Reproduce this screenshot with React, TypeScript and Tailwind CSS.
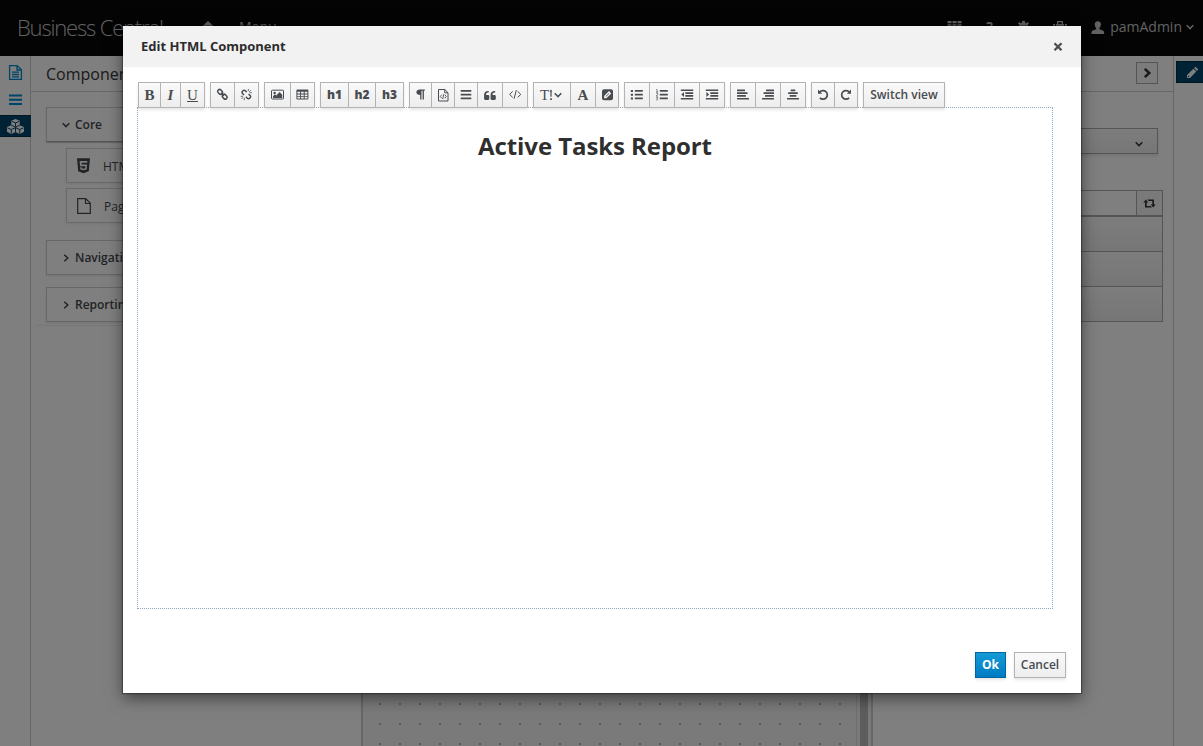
import type { ReactNode } from 'react';

type IconProps = { children: ReactNode; w?: number; h?: number; dx?: number; dy?: number };

function Icon({ children, w = 14, h = 14, dx = 0, dy = 0 }: IconProps) {
  return (
    <svg width={w} height={h} viewBox={`${-dx} ${-dy} ${w} ${h}`} fill="currentColor" className="block shrink-0 overflow-visible">
      {children}
    </svg>
  );
}

function Bars({ rows, pitch = 2.8, top = 0.5 }: { rows: [number, number][]; pitch?: number; top?: number }) {
  return (
    <Icon w={12} h={12}>
      {rows.map(([x, w], i) => (
        <rect key={i} x={x} y={top + i * pitch} width={w} height={1.7} rx={0.3} />
      ))}
    </Icon>
  );
}

function Chevron({ dir, size = 8, stroke = 1.5 }: { dir: 'down' | 'right'; size?: number; stroke?: number }) {
  return (
    <svg width={size} height={size} viewBox="0 0 8 8" fill="none" stroke="currentColor" strokeWidth={stroke} className="block shrink-0">
      <path d={dir === 'down' ? 'M.7 2.2 4 5.6 7.3 2.2' : 'M2.2.7 5.8 4 2.2 7.3'} />
    </svg>
  );
}

function Glyph({ children, className = '' }: { children: ReactNode; className?: string }) {
  return <span className={`font-['Liberation_Serif',serif] text-[15px] leading-none font-bold ${className}`}>{children}</span>;
}

const LinkIcon = (
  <Icon w={12} h={12} dx={-0.7} dy={-0.7}>
    <g fill="none" stroke="currentColor" strokeWidth="1.5">
      <rect x="1.2" y="1.7" width="5.2" height="3.800" rx="1.8" transform="rotate(45 3.8 3.6)" />
      <rect x="5.8" y="6.500" width="5.2" height="3.800" rx="1.8" transform="rotate(45 8.4 8.4)" />
      <path d="m4.600 4.600 3 3" />
    </g>
  </Icon>
);

const UnlinkIcon = (
  <Icon w={12} h={12} dx={-0.7} dy={-0.5}>
    <g fill="none" stroke="currentColor" strokeWidth="1.5">
      <path d="M6.4 3.6 5 2.2a1.6 1.6 0 0 0-2.3 0l-.5.5a1.6 1.6 0 0 0 0 2.3l1.5 1.4" />
      <path d="M5.6 8.4 7 9.8a1.6 1.6 0 0 0 2.3 0l.5-.5a1.6 1.6 0 0 0 0-2.3L8.3 5.6" />
      <path strokeWidth=".8" d="M8 .4v2.3M9 3.3 10.8 1.5M9.2 4.2h2.4M4 9.4v2.3M3 8.7 1.2 10.5M.4 7.8h2.4" />
    </g>
  </Icon>
);

const PictureIcon = (
  <Icon w={13} h={12} dy={-0.6}>
    <rect x=".5" y="1.8" width="12" height="8.800" rx=".8" fill="none" stroke="currentColor" />
    <circle cx="3.6" cy="4.600" r="1.2" />
    <path d="M2 9.5V7.8l2-2 1.2 1.2 3.4-3.3L11.2 6.300v3.2z" />
  </Icon>
);

const TableIcon = (
  <Icon w={12} h={12} dx={-0.6} dy={-0.5}>
    <path d="M1 1h10a1 1 0 0 1 1 1v8a1 1 0 0 1-1 1H1a1 1 0 0 1-1-1V2a1 1 0 0 1 1-1m0 2.300v1.700h2.700V3.300zm3.700 0v1.700h2.600V3.300zm3.600 0v1.700H11V3.300zM1 5.900v1.500h2.700V5.900zm3.700 0v1.500h2.600V5.900zm3.600 0v1.500H11V5.900zM1 8.300v1.700h2.700V8.300zm3.700 0v1.700h2.600V8.300zm3.600 0v1.700H11V8.300z" fillRule="evenodd" />
  </Icon>
);

const ParagraphIcon = (
  <Icon w={9} h={12} dy={-0.5}>
    <path d="M3.800 1H8.800v1.200H7.900V11H6.600V2.200H5.500V11H4.200V6.500C2 6.500.4 5.500.4 3.700.4 2 1.900 1 3.800 1" />
  </Icon>
);

const FileCodeIcon = (
  <Icon w={11} h={13}>
    <g fill="none" stroke="currentColor">
      <path d="M.5.500h6.300l3.200 3.200v8.300H.5zM6.700.500V3.800H10" />
      <path strokeWidth=".9" d="M3.800 5.700 2.300 7.500l1.500 1.800M6.800 5.700l1.500 1.800-1.500 1.800M5.800 5.200 4.700 10" />
    </g>
  </Icon>
);

const QuoteIcon = (
  <Icon w={12} h={11}>
    <path d="M5.300 6.200v2.600c0 .7-.5 1.200-1.200 1.200H1.300C.6 10 .1 9.500.1 8.800V4.600C.1 2.500 1.800.900 3.900.900h.8v1.500h-.8c-1 0-1.800.8-1.800 1.800v.7h2c.7 0 1.200.6 1.200 1.300M11.800 6.200v2.600c0 .7-.5 1.200-1.200 1.200H7.800c-.7 0-1.200-.5-1.200-1.200V4.600c0-2.100 1.700-3.700 3.800-3.700h.8v1.500h-.8c-1 0-1.800.8-1.800 1.800v.7h2c.7 0 1.200.6 1.200 1.300" />
  </Icon>
);

const CodeIcon = (
  <Icon w={13} h={12} dx={-0.3} dy={-0.6}>
    <path fill="none" stroke="currentColor" strokeWidth="1" d="M4 3 .9 6 4 9M9 3l3.100 3L9 9M7.600 1.700 5.400 10.300" />
  </Icon>
);

const PenSquareIcon = (
  <Icon w={11} h={12} dy={-0.3}>
    <path fillRule="evenodd" d="M2 .500h7A2 2 0 0 1 11 2.500v7A2 2 0 0 1 9 11.500H2a2 2 0 0 1-2-2v-7A2 2 0 0 1 2 .500m5 1.800L2.100 7.200v2.400h2.300l4.900-4.900z" />
    <path d="m3.700 7.600 3.300-3.300.4.400-3.300 3.300z" />
  </Icon>
);

function ListIcon({ numbered }: { numbered?: boolean }) {
  return (
    <Icon w={12} h={12} dx={-0.2}>
      <path d="M4 1.100h8v1.700H4zM4 4.800h8v1.700H4zM4 8.500h8v1.700H4z" />
      {numbered ? (
        <path fill="none" stroke="currentColor" strokeWidth=".7" d="M.5.500h.8v2.600M.3 3.100h2M.4 4.300h1.500v1.200L.4 7.100h1.700M.4 8.400h1.500l-.8 1.100c1.400.1 1 1.900-.8 1.500" />
      ) : (
        <path d="M0 1h2.200v2H0zM0 4.700h2.200v2H0zM0 8.400h2.200v2H0z" />
      )}
    </Icon>
  );
}

function IndentIcon({ out }: { out?: boolean }) {
  return (
    <Icon w={13} h={12} dx={-0.5} dy={-0.4}>
      <path d="M.3.900h12.400v1.600H.3zM4.800 3.700h7.900v1.600H4.800zM4.800 6.500h7.900v1.600H4.800zM.3 9.300h12.400v1.600H.3z" />
      <path d={out ? 'M3.500 3.500v4.800L.8 5.900z' : 'M.9 3.500v4.800L3.600 5.900z'} />
    </Icon>
  );
}

function RotateIcon({ flip }: { flip?: boolean }) {
  return (
    <Icon w={12} h={12} dy={-0.3}>
      <g transform={flip ? 'translate(12 0) scale(-1 1)' : undefined}>
        <path fill="none" stroke="currentColor" strokeWidth="1.700" d="M2.700 3.400A4.300 4.300 0 1 1 2.900 9.100" />
        <path d="M1 .900v4.200h4.200z" />
      </g>
    </Icon>
  );
}

const TextHeightIcon = (
  <span className="mr-[2px] flex items-center">
    <Glyph className="font-normal">T</Glyph>
    <Icon w={4} h={12}>
      <path d="M2 .500 3.400 2.400H2.600v5.300H1.400V2.400H.6zM1.200 9.300h1.700v1.700H1.200z" />
    </Icon>
    <span className="w-px" />
    <Chevron dir="down" />
  </span>
);

const groups: { w: string; node: ReactNode }[][] = [
  [
    { w: 'w-[23px]', node: <Glyph>B</Glyph> },
    { w: 'w-[21px]', node: <Glyph className="italic">I</Glyph> },
    { w: 'w-[25px]', node: <Glyph className="font-normal underline underline-offset-1">U</Glyph> },
  ],
  [
    { w: 'w-[25px]', node: LinkIcon },
    { w: 'w-[25px]', node: UnlinkIcon },
  ],
  [
    { w: 'w-[27px]', node: PictureIcon },
    { w: 'w-[25px]', node: TableIcon },
  ],
  [
    { w: 'w-[29px]', node: <b>h1</b> },
    { w: 'w-[28px]', node: <b>h2</b> },
    { w: 'w-[29px]', node: <b>h3</b> },
  ],
  [
    { w: 'w-[23px]', node: ParagraphIcon },
    { w: 'w-[24px]', node: FileCodeIcon },
    { w: 'w-[24px]', node: <Bars pitch={3.7} top={1.1} rows={[[0.7, 10.6], [0.7, 10.6], [0.7, 10.6]]} /> },
    { w: 'w-[26px]', node: QuoteIcon },
    { w: 'w-[26px]', node: CodeIcon },
  ],
  [
    { w: 'w-[38px]', node: TextHeightIcon },
    { w: 'w-[26px]', node: <Glyph>A</Glyph> },
    { w: 'w-[24px]', node: PenSquareIcon },
  ],
  [
    { w: 'w-[26px]', node: <ListIcon /> },
    { w: 'w-[26px]', node: <ListIcon numbered /> },
    { w: 'w-[26px]', node: <IndentIcon out /> },
    { w: 'w-[26px]', node: <IndentIcon /> },
  ],
  [
    { w: 'w-[26px]', node: <Bars rows={[[0, 8], [0, 10.5], [0, 9], [0, 12]]} /> },
    { w: 'w-[26px]', node: <Bars rows={[[4, 8], [1.5, 10.5], [3, 9], [0, 12]]} /> },
    { w: 'w-[26px]', node: <Bars rows={[[3.7, 4.6], [1.2, 9.600], [2.7, 6.6], [0, 12]]} /> },
  ],
  [
    { w: 'w-[24px]', node: <RotateIcon /> },
    { w: 'w-[24px]', node: <RotateIcon flip /> },
  ],
  [{ w: 'w-[82px]', node: 'Switch view' }],
];

function Toolbar() {
  return (
    <div className="relative z-10 -mb-px ml-px flex gap-[5px]">
      {groups.map((group, i) => (
        <div key={i} className="flex shadow-[0_2px_3px_rgba(3,3,3,0.1)]">
          {group.map((item, j) => (
            <button
              key={j}
              className={`flex h-[26px] shrink-0 items-center justify-center border border-[#b3b3b3] bg-linear-to-b from-[#fafafa] to-[#ededed] text-xs font-semibold whitespace-nowrap text-[#484c50] ${j > 0 ? '-ml-px' : ''} ${item.w}`}
            >
              {item.node}
            </button>
          ))}
        </div>
      ))}
    </div>
  );
}

function Modal() {
  return (
    <div className="absolute top-[26px] left-[123px] flex h-[667px] w-[958px] flex-col bg-white shadow-[0_5px_15px_rgba(0,0,0,0.5),0_0_1px_1px_rgba(0,0,0,0.3)]">
      <div className="flex h-[41px] items-center justify-between bg-[#f2f2f2] pr-[18px] pl-[18px]">
        <h4 className="text-[13px] font-bold text-[#2c2c2c]">Edit HTML Component</h4>
        <button className="text-[#4d4d4d]">
          <Icon w={10} h={10} dy={-0.5}>
            <path d="M1.500 1.700l7 7M8.500 1.700l-7 7" stroke="currentColor" strokeWidth="2.300" />
          </Icon>
        </button>
      </div>
      <div className="flex flex-col pt-[15px] pr-7 pl-[14px]">
        <Toolbar />
        <div className="h-[502px] border border-dotted border-[#8ea9c1] pt-[22px] text-center text-2xl leading-8 font-bold tracking-[-0.080px] text-[#2f2f2f]">
          Active Tasks Report
        </div>
      </div>
      <div className="mt-auto flex justify-end gap-2 pr-[15px] pb-[15px] text-xs font-semibold">
        <button className="h-[26px] w-[31px] border border-[#00659c] bg-linear-to-b from-[#159bd6] to-[#007bc3] font-bold text-white shadow-[0_2px_3px_rgba(3,3,3,0.1)]">Ok</button>
        <button className="h-[26px] w-[52px] border border-[#b3b3b3] bg-linear-to-b from-[#fafafa] to-[#ededed] text-[#484c50] shadow-[0_2px_3px_rgba(3,3,3,0.1)]">Cancel</button>
      </div>
    </div>
  );
}

function Header() {
  return (
    <header className="flex h-14 shrink-0 items-center bg-[#080808] pr-[9px] pb-[2px] pl-[17px] text-[#c4c4c4]">
      <span className="w-[185px] text-[22px] font-light tracking-[-1.180px] whitespace-nowrap">Business Central</span>
      <Icon w={13} h={12} dx={-0.500}>
        <path d="M6.500 0 13 6H11v6H2V6H0z" />
      </Icon>
      <span className="ml-6 text-sm">Menu</span>
      <div className="ml-auto flex items-center">
        <div className="flex w-[143px] items-center">
          <Icon w={14} h={12} dx={-0.500}>
            <path d="M0 0h4v2.200H0zM5 0h4v2.200H5zM10 0h4v2.200h-4zM0 3.200h4v2.300H0zM5 3.200h4v2.300H5zM10 3.200h4v2.300h-4zM0 7h4v2.300H0zM5 7h4v2.300H5zM10 7h4v2.300h-4z" />
          </Icon>
          <span className="ml-[24px] w-3 text-sm font-bold">?</span>
          <span className="ml-[19px]">
            <Icon w={13} h={12}>
              <path d="M5 0h3v1.800l1.200.500L10.600 1 12 2.500 10.700 4l.5 1.500H13v3H0v-3h1.800L2.300 4 1 2.500 2.400 1l1.400 1.300L5 1.800z" />
            </Icon>
          </span>
          <span className="ml-[23px]">
            <Icon w={14} h={12}>
              <path d="M4 3V0h6v3h4v9H0V3zm1.300 0h3.400V1.200H5.300zM2 3h.8v9H2zm9.200 0h.8v9h-.8z" fillRule="evenodd" />
            </Icon>
          </span>
        </div>
        <Icon w={14} h={13}>
          <path d="M6.800.200c2 0 3.100 1.300 3.100 3.100 0 1.700-.7 3-1.500 3.700v1.300l3.300 1.300c1 .4 1.500 1 1.500 3.400H.4c0-2.400.5-3 1.500-3.400l3.300-1.300V7c-.8-.7-1.500-2-1.500-3.700C3.700 1.500 4.800.200 6.800.200" />
        </Icon>
        <span className="mr-1 ml-[5px] text-sm">pamAdmin</span>
        <Chevron dir="down" />
      </div>
    </header>
  );
}

function Group({ label, open }: { label: string; open?: boolean }) {
  return (
    <div className={`flex h-[35px] items-center gap-[5px] border border-[#cfcfcf] pl-[15px] text-xs font-semibold text-[#43484d] ${open ? 'border-b-[#aaa] shadow-[0_1px_1px_rgba(3,3,3,0.200)]' : 'shadow-[0_1px_2px_rgba(3,3,3,0.100)]'}`}>
      <Chevron dir={open ? 'down' : 'right'} />
      {label}
    </div>
  );
}

function ComponentsPanel() {
  return (
    <section className="w-[332px] shrink-0 overflow-hidden border-r-2 border-[#cfcfcf]">
      <h2 className="flex h-9 items-center border-b border-[#cfcfcf] pl-[15px] text-base text-[#363636]">Components</h2>
      <div className="ml-[5px] flex flex-col border-b border-[#eee] pt-[15px] pr-4 pb-[3px] pl-[10px]">
        <Group label="Core" open />
        <div className="mt-[6px] mb-[17px] ml-5 flex flex-col gap-[5px] text-xs text-[#43484d]">
          <div className="flex h-[35px] items-center border border-[#d4d4d4] pl-[10px] shadow-[0_1px_3px_rgba(3,3,3,0.080)]">
            <Icon w={13} h={15} dy={0.200}>
              <path fillRule="evenodd" d="M0 0h13l-1.200 13L6.500 15l-5.300-2zm2.600 2.700.5 5.300h5.300l-.2 2-1.700.5-1.700-.5-.1-1H3.200l.2 2.200 3.100.9 3.100-.9.500-5H4.600l-.1-1.700h5.700l.2-1.800z" />
            </Icon>
            <span className="ml-[13px] pt-[2px]">HTML</span>
          </div>
          <div className="flex h-[35px] items-center border border-[#d4d4d4] pl-[10px] shadow-[0_1px_3px_rgba(3,3,3,0.080)]">
            <Icon w={14} h={16}>
              <path fill="none" stroke="currentColor" strokeWidth="1.200" d="M.7.700h8l4.600 4.600v10H.7zM8.500.700v4.800h4.800" />
            </Icon>
            <span className="ml-[13px] pt-[2px]">Page Title</span>
          </div>
        </div>
        <Group label="Navigation" />
        <div className="h-3" />
        <Group label="Reporting" />
      </div>
    </section>
  );
}

function LeftRail() {
  return (
    <nav className="flex w-[31px] shrink-0 flex-col items-center border-r border-[#cfcfcf] pt-[9px] text-[#0088ce]">
      <Icon w={13} h={15}>
        <path fill="none" stroke="currentColor" strokeWidth="1.300" d="M.6.600h7.500l4.300 4.200v9.600H.6zM8 .600V5h4.400M3 7.200h7M3 9.500h7M3 11.800h7" />
      </Icon>
      <div className="h-[14px]" />
      <Icon w={13} h={12}>
        <path d="M0 .500h13v2H0zM0 4.700h13v2H0zM0 9h13v2H0z" />
      </Icon>
      <div className="mt-[9px] -mr-px flex h-[22px] w-[31px] items-center justify-center border-y border-[#002c45] bg-[#00446b] text-white">
        <Icon w={18} h={15} dx={-0.500}>
          <path d="m9 0 4.200 1.700v4.600l4.300 1.800v4.700l-4.300 2.100L9 12.900l-4.200 2L.500 12.800V8.100l4.300-1.800V1.700z" />
          <g stroke="#00446b" strokeWidth="1" fill="none">
            <path d="m5.400 2.400 3.600 1.500 3.600-1.500M9 3.900v3.600M1 8.900l3.800 1.600 3.700-1.600M4.800 10.500v4M9.500 8.900l3.700 1.600L17 8.900M13.200 10.500v4M9 8v4.900M4.800 6.300 9 8.100l4.200-1.800" />
          </g>
        </Icon>
      </div>
    </nav>
  );
}

function PropertiesPanel() {
  return (
    <section className="flex w-[303px] shrink-0 flex-col border-r border-l-2 border-[#cfcfcf]">
      <div className="flex h-9 shrink-0 items-center justify-end border-b border-[#cfcfcf] pr-[15px] pb-px text-[#363636]">
        <button className="flex h-[22px] w-[22px] items-center justify-center border border-[#aaa] bg-[#f8f8f8]">
          <Chevron dir="right" size={10} stroke={2} />
        </button>
      </div>
      <div className="mt-9 mr-[15px] ml-4 flex h-[26px] items-center justify-end border border-[#aaa] bg-linear-to-b from-[#fafafa] to-[#ededed] pt-[6px] pr-[14px] text-[#363636] shadow-[0_2px_3px_rgba(3,3,3,0.100)]">
        <Chevron dir="down" />
      </div>
      <div className="mt-9 mr-[10px] ml-4 flex h-[26px] border border-[#aaa]">
        <div className="flex-1" />
        <div className="flex w-[26px] items-center justify-center border-l border-[#aaa] bg-[#f4f4f4] text-[#363636]">
          <Icon w={13} h={9}>
            <path d="M2.800.500 5.300 3.500H3.700v3.600h4L9 8.600H2V3.500H.3zM4.300.400H11v5.100h1.700l-2.500 3-2.500-3h1.600V1.900H5.600z" />
          </Icon>
        </div>
      </div>
      <div className="mr-[10px] ml-4 flex h-[106px] flex-col divide-y divide-[#aaa] border border-[#aaa] *:flex-1 *:bg-linear-to-b *:from-[#fafafa] *:to-[#ededed]">
        <div />
        <div />
        <div />
      </div>
    </section>
  );
}

export default function App() {
  return (
    <div className="relative flex h-[746px] w-[1203px] flex-col overflow-hidden bg-white font-['Open_Sans',sans-serif]">
      <Header />
      <main className="flex flex-1">
        <LeftRail />
        <ComponentsPanel />
        <div className="h-full w-[493px] bg-[#f5f5f5] bg-[conic-gradient(from_270deg_at_2px_2px,#b4b4b4_90deg,transparent_0)] bg-size-[20px_20px] bg-position-[16px_7px]" />
        <div className="flex w-[15px] border-l border-[#e0e0e0] bg-[#f5f5f5] pl-[3px]">
          <div className="w-2 bg-[#bbb]" />
        </div>
        <PropertiesPanel />
        <nav className="flex-1 pt-[5px] pl-[2px]">
          <div className="flex h-[22px] items-center border border-r-0 border-[#002c45] bg-[#00446b] pl-[9px] text-white">
            <Icon w={13} h={13}>
              <path fillRule="evenodd" d="M9.500.700 12.300 3.500 11 4.900 8.100 2zM7.400 2.700l2.900 2.900L4 12H1V9zM2 9.300V11h1.700z" />
            </Icon>
          </div>
        </nav>
      </main>
      <div className="absolute inset-0 bg-black/50" />
      <Modal />
    </div>
  );
}
